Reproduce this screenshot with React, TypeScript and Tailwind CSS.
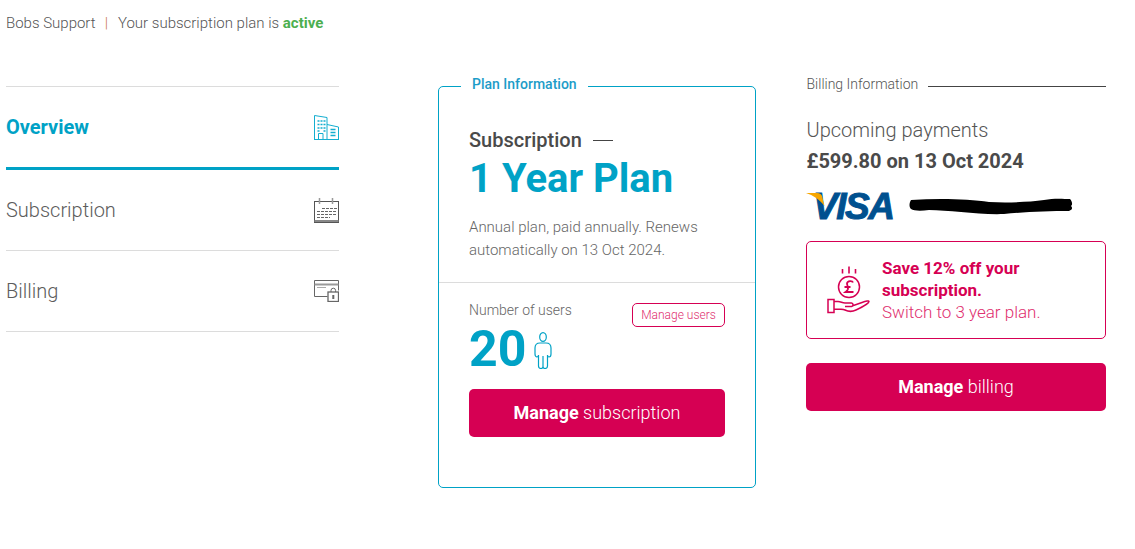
import React from "react";

const Building = () => (
  <svg width="25" height="25" viewBox="0 0 25 25" fill="none" stroke="#14aed0" strokeWidth="1">
    <path d="M0.500 24.500V0.500l12.500 2v22M13 9.500l11.500 2.500v12.500M0 24.500h25" />
    <path d="M4.500 24.500v-6h4.500v6" />
    <path d="M3.500 6h2M6.500 6h2M9.500 6h2M3.500 9.500h2M6.500 9.500h2M9.500 9.500h2M3.500 13h2M6.500 13h2M9.500 13h2M3.500 16h2M9.500 16h2M16.500 14.500h5M16.500 17.500h5M16.500 20.500h5" strokeWidth="1.300" />
  </svg>
);

const Calendar = () => (
  <svg width="25" height="25" viewBox="0 0 25 25" fill="none" stroke="#555">
    <rect x="0.500" y="3.500" width="24" height="21" />
    <path d="M0.500 22.500h24M0.500 23.500h24" stroke="#888" />
    <path d="M5.500 0v6M18.500 0v6" stroke="#999" strokeWidth="1.500" />
    <path d="M8 10.500h15M3 13.500h20M3 16.500h20M3 19.500h13" strokeDasharray="3 1" stroke="#666" />
  </svg>
);

const CardLock = () => (
  <svg width="25" height="22" viewBox="0 0 25 22" fill="none" stroke="#666">
    <path d="M13.500 16.500H0.500V0.500h24v10" />
    <path d="M0.500 4.500h24" stroke="#999" strokeWidth="2" />
    <path d="M3 7.500h9" stroke="#aaa" />
    <rect x="14" y="12" width="10.500" height="9.500" strokeWidth="1.300" />
    <path d="M17 12v-1.500a2.300 2.300 0 0 1 4.600 0V12" />
    <path d="M19.300 15v4" strokeWidth="2" />
  </svg>
);

const Person = () => (
  <svg width="18" height="37" viewBox="0 0 18 37" fill="none" stroke="#00a2c6" strokeWidth="1.200">
    <ellipse cx="9" cy="5" rx="3.300" ry="4.400" />
    <path d="M6 11h6c3 0 5 2 5 5v6c0 2-1 3-2 3s-1.500-.5-1.500-2v11c0 2-1.500 2.500-2.500 2.500-1.200 0-2-.5-2-2V24v10.500c0 1.500-.8 2-2 2-1 0-2.500-.5-2.500-2.500V23c0 1.500-.5 2-1.500 2s-2-1-2-3v-6c0-3 2-5 5-5z" />
  </svg>
);

const Coin = () => (
  <svg width="44" height="50" viewBox="0 0 44 50" fill="none" stroke="#d60053" strokeWidth="1.500">
    <path d="M22 1.500v7M15.500 4v4.500M28.500 4v4.500" strokeWidth="1.600" />
    <circle cx="22" cy="22" r="10.500" />
    <path d="M26 17.500c-.5-1.800-5.500-2.200-6 1 0 2 1.500 3 .8 6-.3 1-1 1.500-2.300 2.500h8M17.500 22h6" strokeWidth="1.800" />
    <path d="M1 34.500h6v13H1zM7 36.500h4c3 0 4 1.500 7 1.500h6.500c2 0 2 3.500 0 3.500H18M25 41l10-3.500c4-1.500 7-2 7-1 0 2-8.500 6.500-13 8.500-3 1.500-7 2-11 0-2.500-1-6-1-11-1" />
  </svg>
);

const Rule = ({ className = "" }: { className?: string }) => <div className={className} />;

function NavRow({ label, active, icon }: { label: string; active?: boolean; icon: React.ReactNode }) {
  return (
    <div className={active ? "flex h-[83px] items-center justify-between border-b-[3px] border-[#00a2c6]" : "flex h-[81px] items-center justify-between border-b border-[#dcdcdc]"}>
      <span className={active ? "text-[20px] font-bold text-[#00a2c6]" : "text-[20px] font-light text-[#5c5c5c]"}>{label}</span>
      {icon}
    </div>
  );
}

export default function App() {
  return (
    <div className="h-[549px] w-[1135px] overflow-hidden bg-white pl-[6px] pt-[14px] font-['Roboto',sans-serif] text-[#4a4a4a]">
      <div className="flex h-[18px] items-center text-[15px] font-light leading-[18px] text-[#555]">
        <span>Bobs Support</span>
        <span className="ml-[9px] mr-[10px] text-[#c9703f]">|</span>
        <span>Your subscription plan is&nbsp;</span>
        <span className="font-bold text-[#4caf50]">active</span>
      </div>

      <div className="mt-[54px] flex items-start">
        <nav className="w-[333px] border-t border-[#dcdcdc]">
          <NavRow label="Overview" active icon={<Building />} />
          <NavRow label="Subscription" icon={<Calendar />} />
          <NavRow label="Billing" icon={<CardLock />} />
        </nav>

        <section className="relative ml-[99px] h-[402px] w-[318px] rounded-[5px] border border-[#00a2c6] px-[30px] pt-[41px]">
          <div className="absolute left-[22px] top-[-12px] bg-white px-[11px] text-[14px] font-medium leading-[18px] text-[#1d9cc8]">Plan Information</div>
          <div className="flex items-center text-[20px] font-medium leading-[24px] text-[#4a4a4a]">
            Subscription
            <Rule className="ml-[11px] h-px w-[20px] bg-[#444]" />
          </div>
          <h1 className="mt-[3px] text-[40px] font-bold leading-[47px] text-[#00a2c6]">1 Year Plan</h1>
          <p className="mt-[14px] text-[15px] font-light leading-[23px] text-[#666]">
            Annual plan, paid annually. Renews automatically on 13 Oct 2024.
          </p>
          <div className="mx-[-30px] mt-[20px] h-px bg-[#dcdcdc]" />
          <div className="flex items-start justify-between pt-[18px]">
            <div>
              <div className="mb-[1px] text-[14px] font-light leading-[18px] text-[#666]">Number of users</div>
              <div className="flex items-center">
                <span className="text-[50px] font-bold leading-[58px] text-[#00a2c6]">20</span>
                <span className="ml-[8px] mt-[2px]"><Person /></span>
              </div>
            </div>
            <button className="mt-[2px] h-[24px] w-[93px] rounded-[5px] border border-[#d60053] text-[12px] font-light text-[#e0306f]">Manage users</button>
          </div>
          <button className="mt-[11px] h-[48px] w-[256px] rounded-[5px] bg-[#d60053] pb-[2px] text-[18px] font-light text-white">
            <b className="font-bold">Manage</b> subscription
          </button>
        </section>

        <aside className="ml-[50px] w-[300px]">
          <div className="flex h-0 items-center text-[14px] font-light text-[#555]">
            <span className="mb-[4px] ml-[0.5px]">Billing Information</span>
            <span className="ml-[10px] h-px flex-1 bg-[#444]" />
          </div>
          <div className="mt-[32px] pl-[0.5px] text-[20px] font-light leading-[24px] text-[#555]">Upcoming payments</div>
          <div className="mt-[7px] pl-[0.5px] text-[20px] font-bold leading-[24px] text-[#4a4a4a]">£599.80 on 13 Oct 2024</div>
          <div className="mt-[16px] flex h-[36px] items-center">
            <div className="relative w-[89px]">
              <span className="relative block pl-[7px] font-['Liberation_Sans',sans-serif] text-[37px] font-bold italic leading-[36px] tracking-[-1.5px] text-[#00508f] [-webkit-text-stroke:1px_#00508f]">VISA</span>
              <svg className="absolute left-0 top-[4px]" width="20" height="16" viewBox="0 0 20 16"><path d="M0 0h11c3 0 4.500 1.500 5 3l2.500 10C14 7 7 2 0 0z" fill="#f7a600" /></svg>
            </div>
            <svg className="ml-[14px]" width="164" height="20" viewBox="0 0 164 20"><path d="M2 3C30 1 60 2 80 5c20 1 40 0 55-2 10-2 20-1 26-1 2 2 3 6 1 7 2 2 1 4-2 5-20 0-45 1-65 3-25 1-55-4-75-4-8 1-15 1-18-1-2-2-2-6 0-9z" fill="#000" /></svg>
          </div>
          <div className="mt-[16px] flex h-[98px] items-center rounded-[5px] border border-[#d60053] pl-[20px]">
            <Coin />
            <div className="ml-[11px] text-[17px] leading-[22px] text-[#d60053]">
              <div className="font-bold">Save 12% off your<br />subscription.</div>
              <div className="font-light text-[#e0306f]">Switch to 3 year plan.</div>
            </div>
          </div>
          <button className="mt-[24px] h-[48px] w-[300px] rounded-[5px] bg-[#d60053] pb-[2px] text-[18px] font-light text-white">
            <b className="font-bold">Manage</b> billing
          </button>
        </aside>
      </div>
    </div>
  );
}
